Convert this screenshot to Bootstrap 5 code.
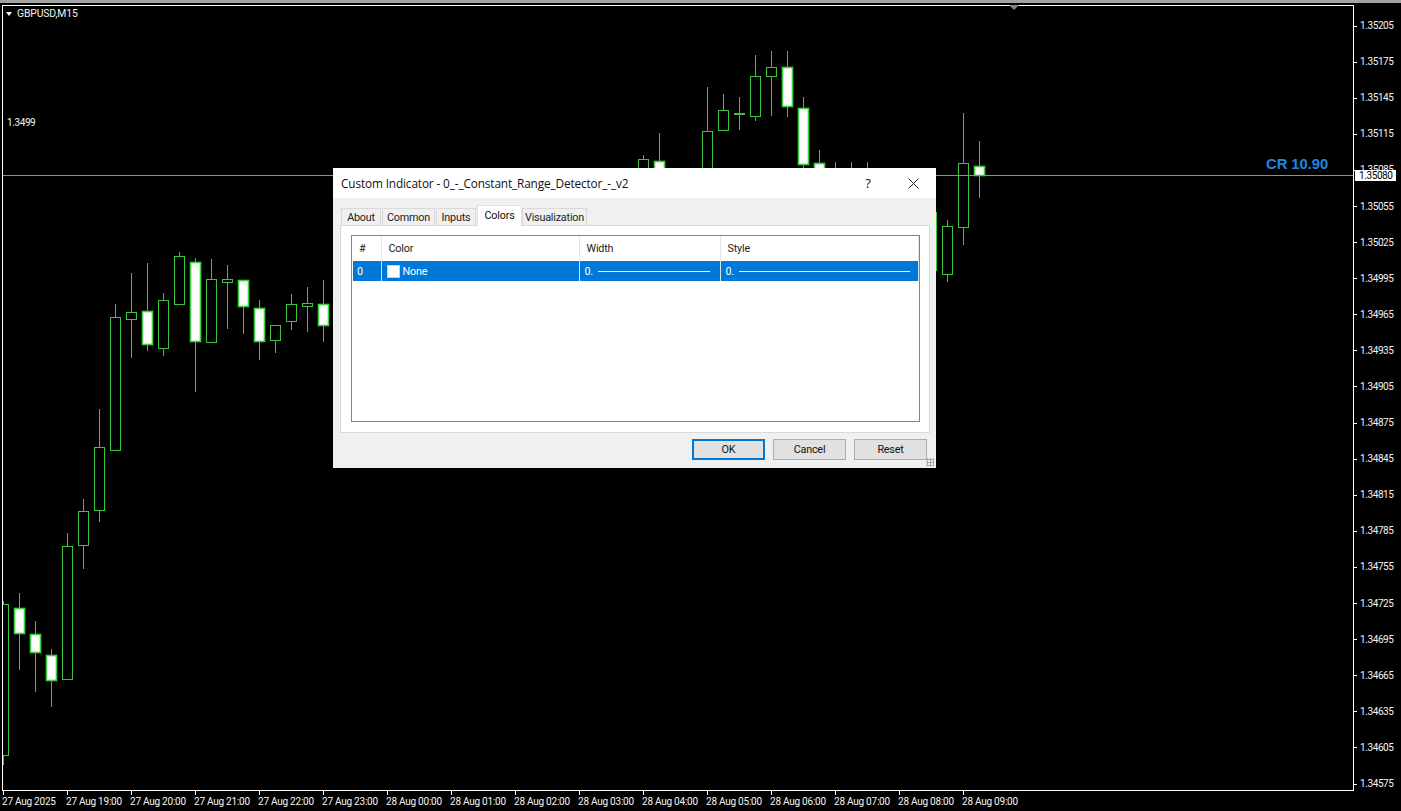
<!DOCTYPE html>
<html lang="en">
<head>
<meta charset="utf-8">
<title>GBPUSD,M15</title>
<link href="https://cdn.jsdelivr.net/npm/bootstrap@5.3.0/dist/css/bootstrap.min.css" rel="stylesheet">
<style>
html,body{margin:0;height:811px;overflow:hidden;background:#000}
.term{width:1401px;height:811px;background:#000;color:#f4f4f4;font:10px/1 Roboto,sans-serif;letter-spacing:-.4px;overflow:hidden}
.top-strip{height:3px;background:#a3a3a3;margin-bottom:2px}
.chart-row{height:786px}
.chart-pane{width:1352px;height:786px;margin-left:2px;border:1px solid #fff;overflow:hidden;flex:none}
.chart-pane svg{display:block}
.wicks{stroke:#3cc43c;stroke-width:1;fill:none}
.hollow rect{fill:#000;stroke:#3cc43c;stroke-width:1}
.solid rect{fill:#fff;stroke:#3fd03f;stroke-width:1.6}
.price-axis{padding-top:3px;width:47px}
.price-row{height:36.1px;flex:none}
.price-tick{width:3px;height:1px;background:#fff;margin-right:3px}
.time-axis{padding-left:3px;height:20px}
.time-cell{width:64px;flex:none;white-space:nowrap}
.time-cell i{display:block;width:1px;height:4px;background:#fff}
.time-cell span{display:block;margin:1px 0 0 -1px;line-height:11px;letter-spacing:-.24px}
.sym-tri{width:0;height:0;border-left:3.5px solid transparent;border-right:3.5px solid transparent;border-top:4px solid #fff;margin-right:5px}
.sym-label{left:6px;top:8px;font-size:10.4px;line-height:11px;letter-spacing:-.15px}
.level-label{left:7px;top:117px;font-size:10px;line-height:11px;letter-spacing:-.4px}
.cr-label{left:1266px;top:156px;font:700 14.8px/17px "Liberation Sans",sans-serif;letter-spacing:-.05px;color:#1f86de}
.now-line{left:3px;top:175px;width:1350px;height:1px;background:#8f8f8f}
.now-price{left:1355px;top:170px;width:41px;height:11px;background:#fff;color:#000;line-height:11px;padding-left:4px}
.peek{left:1009px;top:5px;width:0;height:0;border-left:5px solid transparent;border-right:5px solid transparent;border-top:5px solid #7d8794}
.dlg{left:333px;top:168px;width:603px;height:300px;background:#f0f0f0;color:#111;font:10.8px/13px Roboto,sans-serif;letter-spacing:-.2px}
.dlg-title{height:30px;background:#fff;padding:0 17px 0 8px;font:11.8px/30px "Open Sans",sans-serif;letter-spacing:-.13px}
.dlg-help{font-size:13px;margin-right:35px;width:10px;text-align:center}
.dlg-body{padding:7px 6px 0 7px}
.dlg-tabs{padding-left:1px;height:20px;border:0;flex-wrap:nowrap;align-items:flex-end;gap:0}
.dlg-tabs .nav-link{height:17px;margin:0 1px 0 0;padding:0;border:1px solid #d9d9d9;border-bottom:0;border-radius:0;background:#f0f0f0;color:#222;font-size:10.8px;line-height:17px;text-align:center}
.dlg-tabs .nav-link.active{height:21px;margin:0 0 -1px 0;background:#fff;color:#111;line-height:19px;position:relative;z-index:1}
.tab-about{width:40px}.tab-common{width:53px}.tab-inputs{width:40px}.tab-colors{width:45px}.tab-vis{width:65px}
.dlg-panel{height:208px;background:#fff;border:1px solid #d9d9d9;padding:9px 9px 10px 10px}
.list-box{height:187px;border:1px solid #828282;padding:0 1px}
.list-box .table{table-layout:fixed;width:565px;margin:0;font-size:10.8px;--bs-table-bg:transparent}
.list-box th,.list-box td{padding:0 0 0 7px;border:0;font-weight:400;white-space:nowrap;vertical-align:middle;box-shadow:none}
.list-box th:first-child{padding-left:6px}
.list-box th{height:25px;color:#222;border-right:1px solid #e5e5e5}
.list-box tr.sel td{height:20px;background:#0078d7;color:#fff;border-right:1px solid #cfe4f7;--bs-table-accent-bg:#0078d7;padding-left:5px}
.list-box tr.sel td:first-child{padding-left:4px}
.col-num{width:28px}.col-color{width:198px}.col-width{width:141px}.col-style{width:198px}
.swatch{width:13px;height:13px;background:#fff;border:1px solid #d0d0d0;margin-right:3px;flex:none}
.line-sample{height:1px;background:#fff;flex:1;margin-left:5px}
.w-line{margin-right:10px}.s-line{margin-right:8px}
.dlg-foot{padding:6px 3px 0 0;gap:8px}
.dlg-btn{width:73px;height:21px;padding:0;border:1px solid #adadad;border-radius:0;background:#e1e1e1;color:#111;font:10.8px/19px Roboto,sans-serif;letter-spacing:-.2px}
.dlg-btn.is-default{border:2px solid #0078d7;line-height:17px}
.grip{right:2px;bottom:2px;width:8px;height:8px;background-image:radial-gradient(#a8a8a8 1px,transparent 1.2px);background-size:3px 3px}
</style>
</head>
<body>
<div class="term position-relative">
  <div class="top-strip"></div>
  <div class="chart-row d-flex">
    <div class="chart-pane">
      <svg width="1350" height="784" viewBox="3 6 1350 784" aria-label="Candlestick chart">
        <path class="wicks" d="M3.5 601V605M3.5 755V765M19.5 593V670M35.5 621V692M51.5 649V707M67.5 533V546M83.5 499V511M83.5 545V569M99.5 409V447M99.5 510V522M115.5 304V317M131.5 273V358M147.5 263V351M163.5 293V300M163.5 348V356M179.5 252V256M195.5 258V392M211.5 259V279M227.5 265V329M243.5 307V334M259.5 300V360M275.5 340V353M291.5 294V304M291.5 321V330M307.5 287V332M323.5 280V342M643.5 155V168M659.5 133V168M707.5 87V131M723.5 94V110M739.5 97V130M755.5 55V76M755.5 116V121M771.5 51V116M787.5 51V67M787.5 107V117M803.5 97V108M803.5 165V168M819.5 150V168M835.5 162V168M851.5 162V168M867.5 162V168M947.5 220V226M947.5 274V282M963.5 113V163M963.5 227V245M979.5 141V198"/>
        <g class="hollow">
          <rect x="-1.5" y="604.5" width="10" height="151"/>
          <rect x="62.5" y="546.5" width="10" height="133"/>
          <rect x="78.5" y="511.5" width="10" height="34"/>
          <rect x="94.5" y="447.5" width="10" height="63"/>
          <rect x="110.5" y="317.5" width="10" height="133"/>
          <rect x="126.5" y="312.5" width="10" height="7"/>
          <rect x="158.5" y="300.5" width="10" height="48"/>
          <rect x="174.5" y="256.5" width="10" height="48"/>
          <rect x="206.5" y="279.5" width="10" height="63"/>
          <rect x="222.5" y="279.5" width="10" height="3"/>
          <rect x="270.5" y="325.5" width="10" height="15"/>
          <rect x="286.5" y="304.5" width="10" height="17"/>
          <rect x="302.5" y="303.5" width="10" height="3"/>
          <rect x="638.5" y="159.5" width="10" height="20"/>
          <rect x="702.5" y="131.5" width="10" height="50"/>
          <rect x="718.5" y="110.5" width="10" height="20"/>
          <rect x="734.5" y="113.5" width="10" height="1"/>
          <rect x="750.5" y="76.5" width="10" height="40"/>
          <rect x="766.5" y="67.5" width="10" height="9"/>
          <rect x="926.5" y="212.5" width="10" height="58"/>
          <rect x="942.5" y="226.5" width="10" height="48"/>
          <rect x="958.5" y="163.5" width="10" height="64"/>
        </g>
        <g class="solid">
          <rect x="14.5" y="608.5" width="10" height="25"/>
          <rect x="30.5" y="634.5" width="10" height="18"/>
          <rect x="46.5" y="655.5" width="10" height="25"/>
          <rect x="142.5" y="311.5" width="10" height="33"/>
          <rect x="190.5" y="262.5" width="10" height="79"/>
          <rect x="238.5" y="280.5" width="10" height="26"/>
          <rect x="254.5" y="308.5" width="10" height="33"/>
          <rect x="318.5" y="304.5" width="10" height="21"/>
          <rect x="654.5" y="161.5" width="10" height="20"/>
          <rect x="782.5" y="67.5" width="10" height="39"/>
          <rect x="798.5" y="108.5" width="10" height="56"/>
          <rect x="814.5" y="163.5" width="10" height="20"/>
          <rect x="974.5" y="166.5" width="10" height="9"/>
        </g>
      </svg>
    </div>
    <div class="price-axis flex-none">
      <div class="price-row d-flex align-items-center"><span class="price-tick"></span>1.35205</div>
      <div class="price-row d-flex align-items-center"><span class="price-tick"></span>1.35175</div>
      <div class="price-row d-flex align-items-center"><span class="price-tick"></span>1.35145</div>
      <div class="price-row d-flex align-items-center"><span class="price-tick"></span>1.35115</div>
      <div class="price-row d-flex align-items-center"><span class="price-tick"></span>1.35085</div>
      <div class="price-row d-flex align-items-center"><span class="price-tick"></span>1.35055</div>
      <div class="price-row d-flex align-items-center"><span class="price-tick"></span>1.35025</div>
      <div class="price-row d-flex align-items-center"><span class="price-tick"></span>1.34995</div>
      <div class="price-row d-flex align-items-center"><span class="price-tick"></span>1.34965</div>
      <div class="price-row d-flex align-items-center"><span class="price-tick"></span>1.34935</div>
      <div class="price-row d-flex align-items-center"><span class="price-tick"></span>1.34905</div>
      <div class="price-row d-flex align-items-center"><span class="price-tick"></span>1.34875</div>
      <div class="price-row d-flex align-items-center"><span class="price-tick"></span>1.34845</div>
      <div class="price-row d-flex align-items-center"><span class="price-tick"></span>1.34815</div>
      <div class="price-row d-flex align-items-center"><span class="price-tick"></span>1.34785</div>
      <div class="price-row d-flex align-items-center"><span class="price-tick"></span>1.34755</div>
      <div class="price-row d-flex align-items-center"><span class="price-tick"></span>1.34725</div>
      <div class="price-row d-flex align-items-center"><span class="price-tick"></span>1.34695</div>
      <div class="price-row d-flex align-items-center"><span class="price-tick"></span>1.34665</div>
      <div class="price-row d-flex align-items-center"><span class="price-tick"></span>1.34635</div>
      <div class="price-row d-flex align-items-center"><span class="price-tick"></span>1.34605</div>
      <div class="price-row d-flex align-items-center"><span class="price-tick"></span>1.34575</div>
    </div>
  </div>
  <div class="time-axis d-flex">
    <div class="time-cell"><i></i><span>27 Aug 2025</span></div>
    <div class="time-cell"><i></i><span>27 Aug 19:00</span></div>
    <div class="time-cell"><i></i><span>27 Aug 20:00</span></div>
    <div class="time-cell"><i></i><span>27 Aug 21:00</span></div>
    <div class="time-cell"><i></i><span>27 Aug 22:00</span></div>
    <div class="time-cell"><i></i><span>27 Aug 23:00</span></div>
    <div class="time-cell"><i></i><span>28 Aug 00:00</span></div>
    <div class="time-cell"><i></i><span>28 Aug 01:00</span></div>
    <div class="time-cell"><i></i><span>28 Aug 02:00</span></div>
    <div class="time-cell"><i></i><span>28 Aug 03:00</span></div>
    <div class="time-cell"><i></i><span>28 Aug 04:00</span></div>
    <div class="time-cell"><i></i><span>28 Aug 05:00</span></div>
    <div class="time-cell"><i></i><span>28 Aug 06:00</span></div>
    <div class="time-cell"><i></i><span>28 Aug 07:00</span></div>
    <div class="time-cell"><i></i><span>28 Aug 08:00</span></div>
    <div class="time-cell"><i></i><span>28 Aug 09:00</span></div>
  </div>

  <div class="sym-label position-absolute d-flex align-items-center"><span class="sym-tri"></span>GBPUSD,M15</div>
  <div class="level-label position-absolute">1.3499</div>
  <div class="now-line position-absolute"></div>
  <div class="peek position-absolute"></div>
  <div class="cr-label position-absolute">CR 10.90</div>
  <div class="now-price position-absolute">1.35080</div>

  <div class="dlg position-absolute" role="dialog" aria-label="Custom Indicator">
    <div class="dlg-title d-flex align-items-center">
      <span class="flex-grow-1">Custom Indicator - 0_-_Constant_Range_Detector_-_v2</span>
      <span class="dlg-help">?</span>
      <svg width="11" height="11" viewBox="0 0 11 11" aria-hidden="true"><path d="M.5.5l10 10M10.5.5l-10 10" stroke="#222" stroke-width="1" fill="none"/></svg>
    </div>
    <div class="dlg-body">
      <ul class="nav nav-tabs dlg-tabs">
        <li class="nav-item"><a class="nav-link tab-about" href="#">About</a></li>
        <li class="nav-item"><a class="nav-link tab-common" href="#">Common</a></li>
        <li class="nav-item"><a class="nav-link tab-inputs" href="#">Inputs</a></li>
        <li class="nav-item"><a class="nav-link tab-colors active" href="#">Colors</a></li>
        <li class="nav-item"><a class="nav-link tab-vis" href="#">Visualization</a></li>
      </ul>
      <div class="dlg-panel">
        <div class="list-box">
          <table class="table">
            <colgroup><col class="col-num"><col class="col-color"><col class="col-width"><col class="col-style"></colgroup>
            <thead><tr><th>#</th><th>Color</th><th>Width</th><th>Style</th></tr></thead>
            <tbody>
              <tr class="sel">
                <td>0</td>
                <td><div class="d-flex align-items-center"><span class="swatch"></span>None</div></td>
                <td><div class="d-flex align-items-center">0.<span class="line-sample w-line"></span></div></td>
                <td><div class="d-flex align-items-center">0.<span class="line-sample s-line"></span></div></td>
              </tr>
            </tbody>
          </table>
        </div>
      </div>
      <div class="dlg-foot d-flex justify-content-end">
        <button type="button" class="btn dlg-btn is-default">OK</button>
        <button type="button" class="btn dlg-btn">Cancel</button>
        <button type="button" class="btn dlg-btn">Reset</button>
      </div>
    </div>
    <div class="grip position-absolute"></div>
  </div>
</div>
<script src="https://cdn.jsdelivr.net/npm/bootstrap@5.3.0/dist/js/bootstrap.bundle.min.js"></script>
</body>
</html>
